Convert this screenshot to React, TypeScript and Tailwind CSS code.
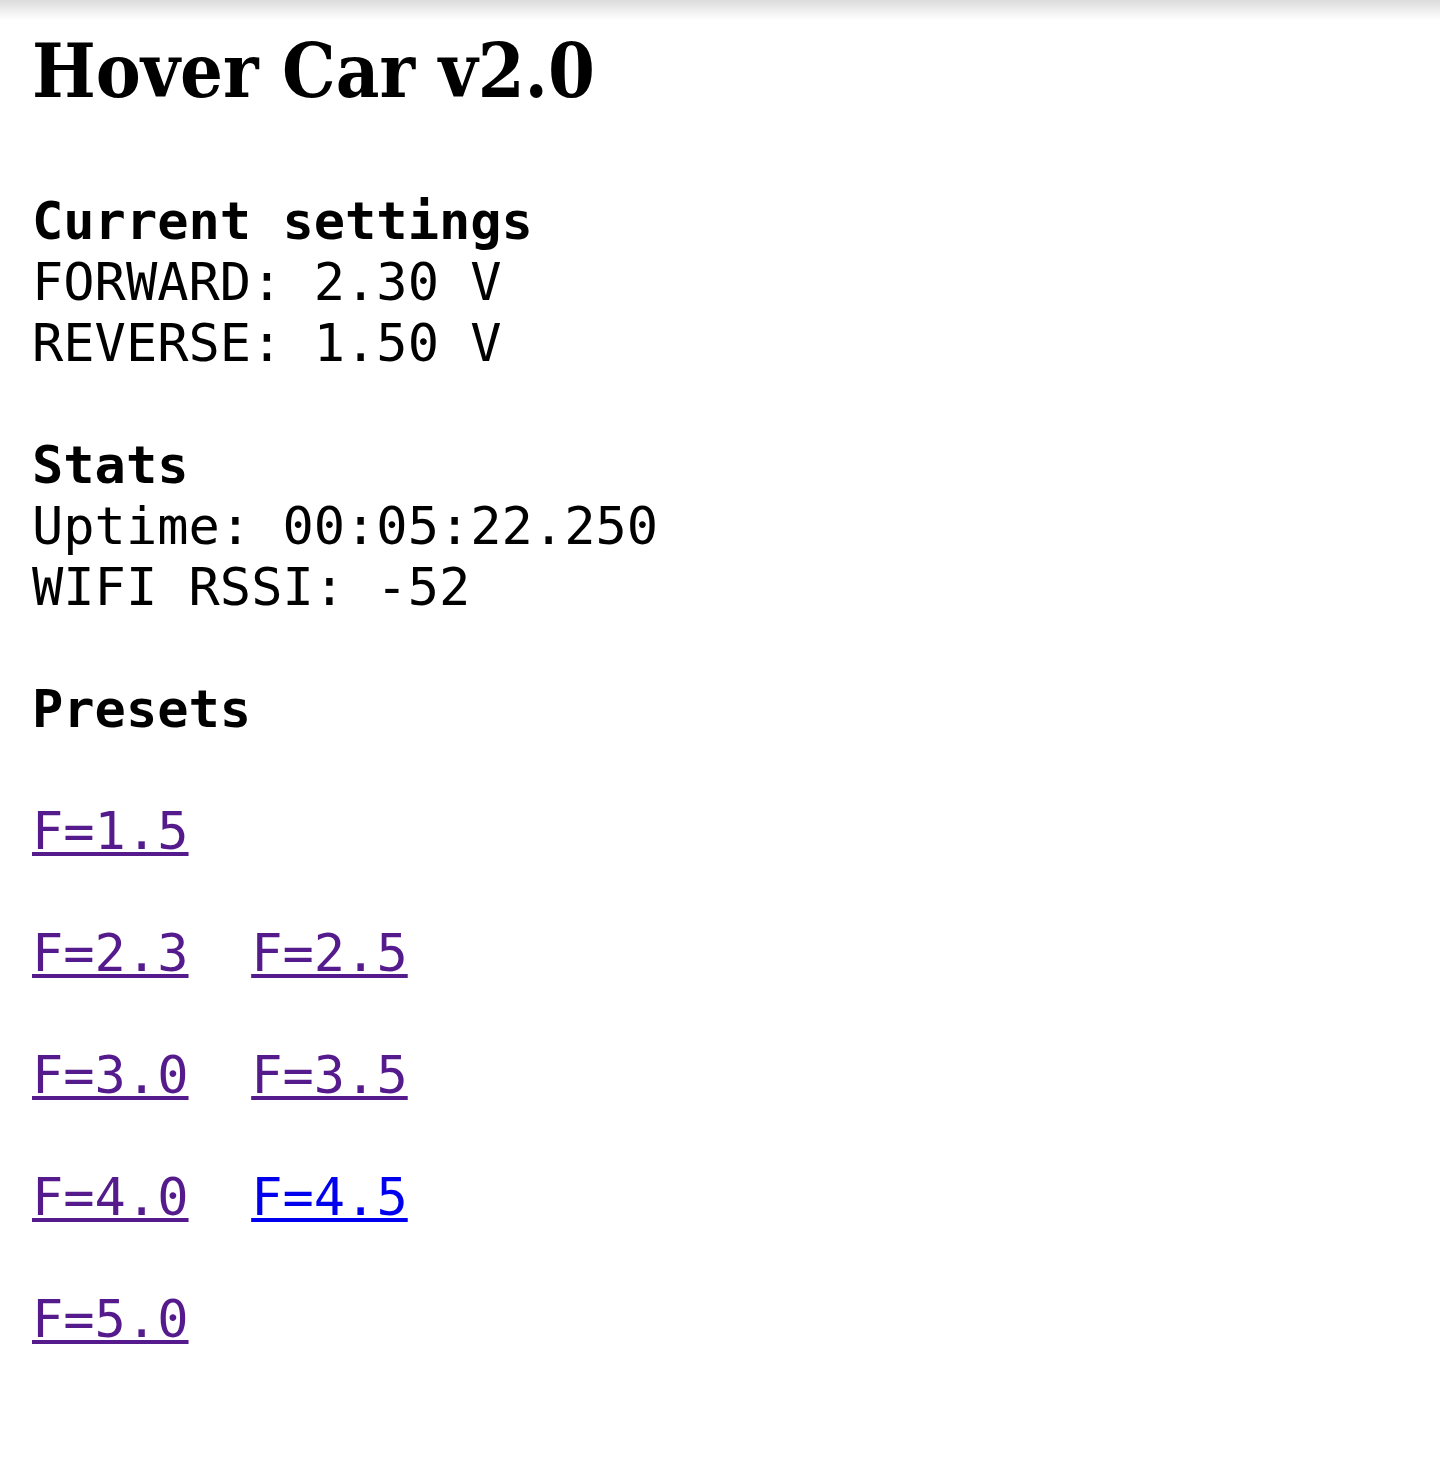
import React from 'react';

type Preset = { label: string; visited: boolean };

const presetRows: Preset[][] = [
  [{ label: 'F=1.5', visited: true }],
  [
    { label: 'F=2.3', visited: true },
    { label: 'F=2.5', visited: true },
  ],
  [
    { label: 'F=3.0', visited: true },
    { label: 'F=3.5', visited: true },
  ],
  [
    { label: 'F=4.0', visited: true },
    { label: 'F=4.5', visited: false },
  ],
  [{ label: 'F=5.0', visited: true }],
];

const Line: React.FC<{ children?: React.ReactNode; bold?: boolean }> = ({ children, bold }) => (
  <div className={`h-[61px] whitespace-pre ${bold ? 'font-bold' : ''}`}>{children}</div>
);

const PresetLink: React.FC<{ preset: Preset }> = ({ preset }) => (
  <a
    href="#"
    className={`underline decoration-[4px] underline-offset-[3px] ${
      preset.visited ? 'text-[#551a8b]' : 'text-[#0000ee]'
    }`}
  >
    {preset.label}
  </a>
);

const App: React.FC = () => {
  return (
    <div className="relative min-h-[1465px] bg-white text-black">
      <div className="absolute inset-x-0 top-0 h-[20px] bg-gradient-to-b from-[#dcdcdc] to-white" />
      <div className="relative px-8 pt-[34px]">
        <h3
          className="text-[75px] leading-[75px] font-bold font-stretch-condensed"
          style={{ fontFamily: '"DejaVu Serif", "Liberation Serif", serif' }}
        >
          Hover Car v2.0
        </h3>
        <div
          className="mt-[82px] text-[52px] leading-[61px]"
          style={{ fontFamily: '"DejaVu Sans Mono", "Liberation Mono", monospace' }}
        >
          <Line bold>Current settings</Line>
          <Line>FORWARD: 2.30 V</Line>
          <Line>REVERSE: 1.50 V</Line>
          <Line />
          <Line bold>Stats</Line>
          <Line>Uptime: 00:05:22.250</Line>
          <Line>WIFI RSSI: -52</Line>
          <Line />
          <Line bold>Presets</Line>
          {presetRows.map((row, i) => (
            <React.Fragment key={i}>
              <Line />
              <Line>
                {row.map((preset, j) => (
                  <React.Fragment key={preset.label}>
                    {j > 0 ? '  ' : null}
                    <PresetLink preset={preset} />
                  </React.Fragment>
                ))}
              </Line>
            </React.Fragment>
          ))}
        </div>
      </div>
    </div>
  );
};

export default App;
